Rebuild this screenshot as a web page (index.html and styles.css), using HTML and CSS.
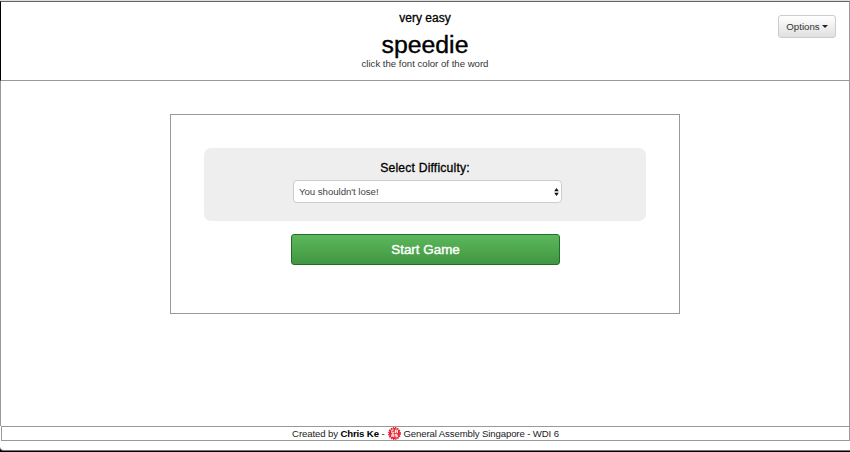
FILE: index.html
```html
<!DOCTYPE html>
<html lang="en">
<head>
<meta charset="utf-8">
<title>speedie</title>
<link rel="stylesheet" href="styles.css">
</head>
<body>
<div class="page">
  <header class="header">
    <div class="side"></div>
    <div class="heading">
      <div class="level"><span>very easy</span></div>
      <h1 class="title"><span>speedie</span></h1>
      <p class="hint"><span>click the font color of the word</span></p>
    </div>
    <div class="side">
      <button class="options" type="button"><span>Options</span><i class="caret"></i></button>
    </div>
  </header>
  <main class="main">
    <section class="board">
      <div class="panel">
        <h2 class="label"><span>Select Difficulty:</span></h2>
        <div class="select"><span>You shouldn't lose!</span>
          <svg class="arrows" width="5" height="8" viewBox="0 0 5 8"><path d="M2.5 0 4.8 3.2H.2zM2.5 8 .2 4.8h4.6z"/></svg>
        </div>
      </div>
      <button class="start" type="button"><span>Start Game</span></button>
    </section>
  </main>
  <footer class="footer">
    <span class="credit">Created by <b>Chris Ke</b> -</span>
    <svg class="logo" width="13" height="13" viewBox="0 0 26 26">
      <circle cx="13" cy="13" r="11" fill="#e9212f"/>
      <circle cx="13" cy="13" r="11.5" fill="none" stroke="#e9212f" stroke-width="3" stroke-dasharray="2.6 1.9"/>
      <path d="M11.7 6H7.7v6h4V9.4M14.8 12.4V6h4v6.4M14.8 9.6h4M7.7 20.2v-5.6h4v5.6M7.7 17.8h4M18.8 14.6h-4v2.6h4v2.6h-4" fill="none" stroke="#fff" stroke-width="1.9"/>
    </svg>
    <span class="school">General Assembly Singapore - WDI 6</span>
  </footer>
</div>
</body>
</html>
```
FILE: styles.css
```css
* { box-sizing: border-box; }
body {
  margin: 0;
  background: #000;
  font-family: "Liberation Sans", Arial, sans-serif;
  color: #000;
}
.page {
  display: flex;
  flex-direction: column;
  width: 850px;
  height: 451px;
  background: #fff;
  border-top: 1px solid #ddd;
  border-bottom: 1px solid #777;
  border-radius: 0 0 0 4px;
}
.header {
  display: flex;
  justify-content: space-between;
  height: 80px;
  border: 1px solid #999;
  border-top-color: #666;
  border-left-color: #000;
}
.side { width: 200px; text-align: right; padding: 13px 13px 0 0; }
.heading { flex: 1; text-align: center; white-space: nowrap; }
.level { margin-top: 8px; font-size: 12px; line-height: 16px; -webkit-text-stroke: .3px #000; }
.title { margin: 5px 0 0; font-size: 24.8px; line-height: 28px; font-weight: 400; -webkit-text-stroke: .4px #000; }
.hint { margin: -1px 0 0; font-size: 9.6px; line-height: 12px; color: #333; }
.options {
  width: 58px;
  height: 23px;
  padding: 0;
  border: 1px solid #ccc;
  border-radius: 3px;
  background: linear-gradient(#fff, #e0e0e0);
  font: 9.7px/20px "Liberation Sans", Arial, sans-serif;
  color: #333;
}
.caret {
  display: inline-block;
  margin-left: 2px;
  vertical-align: 2px;
  border: 3px solid transparent;
  border-top-color: #222;
  border-bottom: 0;
}
.main {
  flex: 1;
  padding: 33px 0 0 169px;
  border: solid #999;
  border-width: 0 1px;
}
.board {
  width: 510px;
  height: 200px;
  padding: 33px;
  border: 1px solid #999;
}
.panel {
  width: 442px;
  height: 73px;
  padding: 13px 0 0 89px;
  border-radius: 7px;
  background: #eee;
}
.label {
  width: 264px;
  margin: 0 0 4px;
  text-align: center;
  font-size: 12.2px;
  letter-spacing: .18px;
  line-height: 15px;
  font-weight: 400;
  -webkit-text-stroke: .3px #000;
}
.select {
  display: flex;
  align-items: center;
  justify-content: space-between;
  width: 269px;
  height: 23px;
  padding: 0 2px 0 5px;
  border: 1px solid #ccc;
  border-radius: 4px;
  background: #fff;
  font-size: 9.7px;
  letter-spacing: -.06px;
  color: #444;
}
.arrows { fill: #111; }
.start {
  display: block;
  width: 269px;
  height: 31px;
  margin: 13px 0 0 87px;
  padding: 0;
  border: 1px solid #216e28;
  border-radius: 3px;
  background: linear-gradient(#5cb85c, #419641);
  font: 13.4px/28px "Liberation Sans", Arial, sans-serif;
  color: #fff;
  -webkit-text-stroke: .4px #fff;
}
.footer {
  display: flex;
  justify-content: center;
  align-items: center;
  height: 15px;
  margin: 0 0 9px 1px;
  border: 1px solid #999;
  font-size: 9.6px;
  line-height: 13px;
  letter-spacing: -.12px;
  color: #222;
}
.footer b { color: #000; }
.logo { margin: 0 3px; }
```
